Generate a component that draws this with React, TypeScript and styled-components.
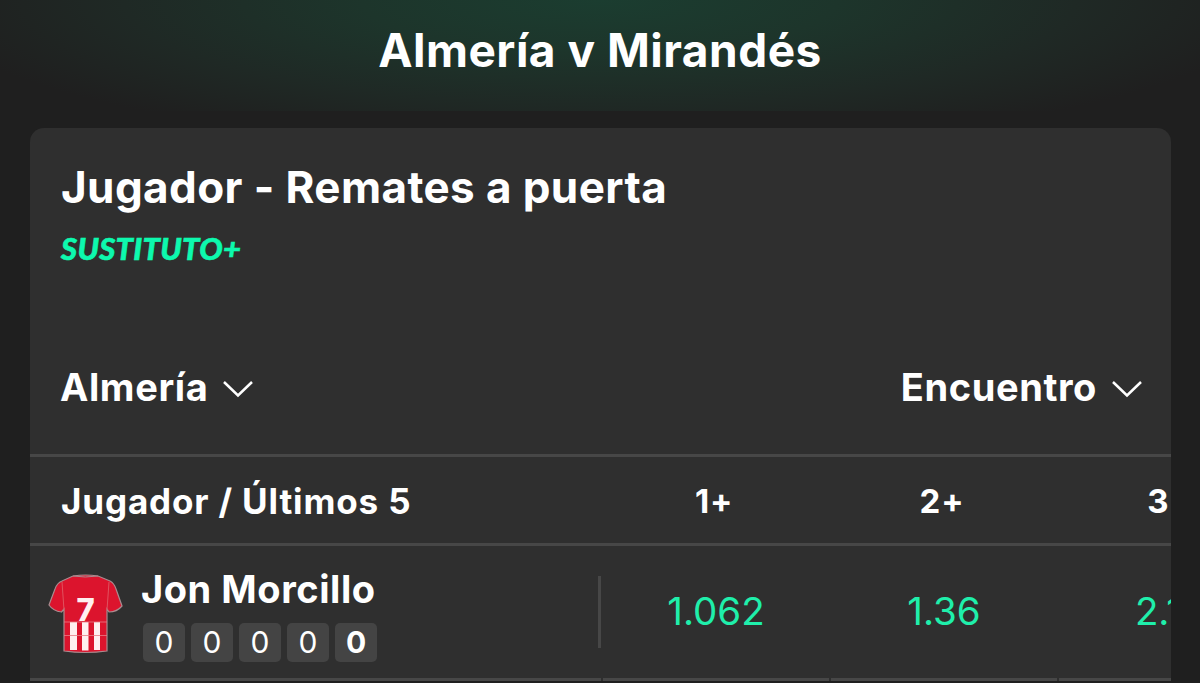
import React from "react";
import styled, { createGlobalStyle } from "styled-components";

const GlobalStyle = createGlobalStyle`
  * {
    box-sizing: border-box;
  }
  body {
    margin: 0;
    background: #1f1f1f;
    color: #fff;
    font-family: Inter, "Liberation Sans", sans-serif;
    overflow: hidden;
  }
`;

const Page = styled.main`
  width: 1200px;
  height: 683px;
  overflow: hidden;
`;

const Header = styled.header`
  display: flex;
  justify-content: center;
  height: 111px;
  padding-top: 20px;
  margin-bottom: 17px;
  background: radial-gradient(ellipse 680px 150px at 50% 0, #1b3d30 0%, #1d352b 35%, #1f2925 70%, #1f1f1f 100%);
`;

const Title = styled.h1`
  margin: 0;
  font-size: 46px;
  line-height: 60px;
  font-weight: 700;
  letter-spacing: 0.5px;
  white-space: nowrap;
`;

const Card = styled.section`
  width: 1141px;
  height: 553px;
  margin-left: 30px;
  border-radius: 14px 14px 0 0;
  background: #2f2f2f;
  overflow: hidden;
`;

const MarketHead = styled.div`
  height: 191px;
  padding: 32px 31px 0;
`;

const MarketTitle = styled.h2`
  margin: 0;
  font-size: 44px;
  line-height: 54px;
  font-weight: 700;
  letter-spacing: 0.4px;
  white-space: nowrap;
`;

const SubTag = styled.div`
  margin-top: 14px;
  font-family: Lato, sans-serif;
  font-size: 31px;
  line-height: 40px;
  font-weight: 900;
  font-style: italic;
  letter-spacing: 0.3px;
  color: #0df9ae;
  -webkit-text-stroke: 0.6px #0df9ae;
`;

const Filters = styled.div`
  display: flex;
  justify-content: space-between;
  align-items: center;
  height: 135px;
  padding: 0 29px 0 30px;
`;

const Filter = styled.div`
  display: flex;
  align-items: center;
  gap: 15px;
  font-size: 38px;
  font-weight: 700;
  letter-spacing: 0.6px;
`;

const Columns = styled.div`
  display: flex;
  align-items: center;
  height: 92px;
  border-top: 3px solid #474747;
  border-bottom: 3px solid #474747;
`;

const ColumnTitle = styled.div`
  flex: 0 0 570px;
  padding: 1px 0 0 31px;
  font-size: 35px;
  font-weight: 700;
  letter-spacing: 0.85px;
`;

const ColumnLabel = styled.div`
  flex: 0 0 228px;
  padding-top: 2px;
  text-align: center;
  font-size: 33px;
  font-weight: 700;
  letter-spacing: 0.8px;
`;

const Row = styled.div`
  display: flex;
  height: 135px;
`;

const Player = styled.div`
  display: flex;
  flex: 0 0 571px;
  align-items: flex-start;
  padding: 28px 0 0 18px;
  border-bottom: 3px solid #474747;
`;

const PlayerInfo = styled.div`
  flex: 1;
  margin: -10px 0 0 19px;
`;

const PlayerName = styled.div`
  margin-left: -1px;
  font-size: 38px;
  line-height: 50px;
  font-weight: 700;
  letter-spacing: 0.55px;
  white-space: nowrap;
`;

const LastFive = styled.div`
  display: flex;
  gap: 6px;
  margin: 9px 0 0 1px;
`;

const Stat = styled.span<{ $current?: boolean }>`
  width: 42px;
  height: 39px;
  border-radius: 5px;
  background: #444;
  font-size: 30px;
  line-height: 39px;
  text-align: center;
  font-weight: ${(props) => (props.$current ? 700 : 400)};
`;

const Divider = styled.div`
  width: 3px;
  height: 72px;
  margin-top: 2px;
  background: #474747;
`;

const Odds = styled.div`
  flex: 0 0 226px;
  margin-left: 2px;
  border-bottom: 3px solid #474747;
  font-size: 38.5px;
  line-height: 130px;
  text-align: center;
  color: #1fefab;

  &:last-child {
    padding-right: 3px;
  }
`;

const ChevronIcon = styled.svg`
  margin-top: 5px;
`;

const Chevron = () => (
  <ChevronIcon width="30" height="18" viewBox="0 0 30 18" fill="none">
    <path d="M1 2 L15 15.5 L29 2" stroke="#fff" strokeWidth="2.5" />
  </ChevronIcon>
);

const Shirt = ({ number }: { number: number }) => (
  <svg width="75" height="80" viewBox="0 0 75 80">
    <path
      d="M25 2 Q37.5 0 50 2 L62 7 Q66 9 68 15 L74 32 Q69 38 61 38 L59 35 V77 Q37 80 16 77 V35 L13.5 38 Q5 37 1 31 L7 15 Q9 9 14 7 Z"
      fill="#dc142d"
      stroke="#a98b8f"
      strokeWidth="1.2"
    />
    <path d="M22 48h7v28h-7z M34 48h6.500v28.500h-6.500z M46 48h6v28h-6z" fill="#fff0f0" />
    <path d="M14 8 L16 36 M61 8 L59 36" stroke="#e0525f" strokeWidth="1" fill="none" />
    <path d="M16 48H59 M16 61.5H59" stroke="#e77d86" strokeWidth="0.8" />
    <path d="M25 2 Q37 4 50 2" stroke="#a98b8f" strokeWidth="1" fill="none" />
    <text
      x="37.5"
      y="47"
      textAnchor="middle"
      fontFamily="Inter, sans-serif"
      fontSize="31"
      fontWeight="800"
      fill="#fff0f0"
    >
      {number}
    </text>
  </svg>
);

const lines = ["1+", "2+", "3+"];

const player = {
  name: "Jon Morcillo",
  number: 7,
  lastFive: [0, 0, 0, 0, 0],
  odds: ["1.062", "1.36", "2.10"],
};

const App = () => {
  return (
    <Page>
      <GlobalStyle />
      <Header>
        <Title>Almería v Mirandés</Title>
      </Header>
      <Card>
        <MarketHead>
          <MarketTitle>Jugador - Remates a puerta</MarketTitle>
          <SubTag>SUSTITUTO+</SubTag>
        </MarketHead>
        <Filters>
          <Filter>
            Almería
            <Chevron />
          </Filter>
          <Filter>
            Encuentro
            <Chevron />
          </Filter>
        </Filters>
        <Columns>
          <ColumnTitle>Jugador / Últimos 5</ColumnTitle>
          {lines.map((line) => (
            <ColumnLabel key={line}>{line}</ColumnLabel>
          ))}
        </Columns>
        <Row>
          <Player>
            <Shirt number={player.number} />
            <PlayerInfo>
              <PlayerName>{player.name}</PlayerName>
              <LastFive>
                {player.lastFive.map((stat, i) => (
                  <Stat key={i} $current={i === player.lastFive.length - 1}>
                    {stat}
                  </Stat>
                ))}
              </LastFive>
            </PlayerInfo>
            <Divider />
          </Player>
          {player.odds.map((price) => (
            <Odds key={price}>{price}</Odds>
          ))}
        </Row>
      </Card>
    </Page>
  );
};

export default App;
